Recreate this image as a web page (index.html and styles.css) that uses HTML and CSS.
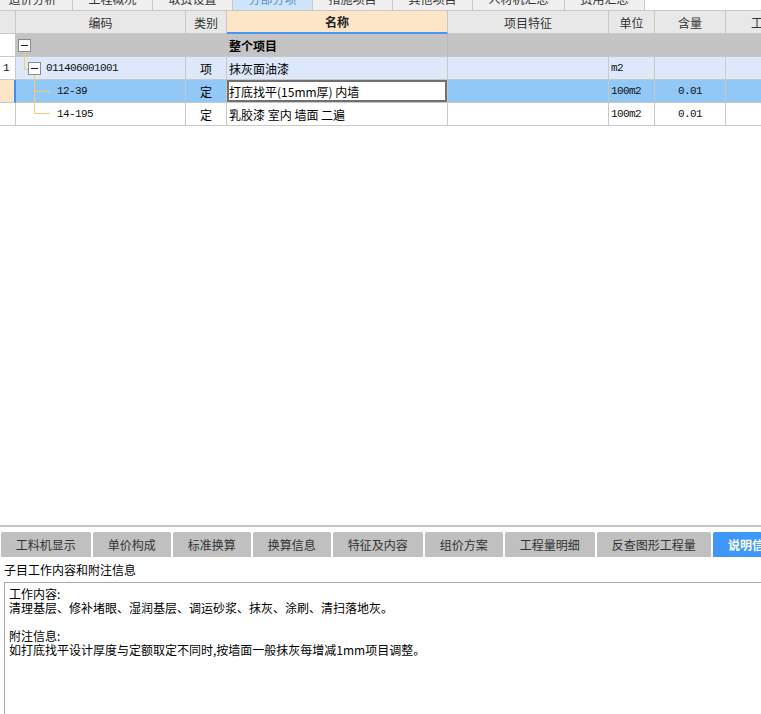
FILE: index.html
```html
<!DOCTYPE html>
<html lang="zh-CN">
<head>
<meta charset="utf-8">
<title>分部分项</title>
<link rel="stylesheet" href="styles.css">
</head>
<body>
<div class="page">
  <div class="toptabs">
    <div class="ttab first">造价分析</div>
    <div class="ttab">工程概况</div>
    <div class="ttab">取费设置</div>
    <div class="ttab active">分部分项</div>
    <div class="ttab">措施项目</div>
    <div class="ttab">其他项目</div>
    <div class="ttab wide">人材机汇总</div>
    <div class="ttab">费用汇总</div>
  </div>

  <div class="grid">
    <div class="row head">
      <div class="c c0"></div>
      <div class="c c1 center">编码</div>
      <div class="c c2 center">类别</div>
      <div class="c c3 center namehead">名称</div>
      <div class="c c4 center">项目特征</div>
      <div class="c c5 center">单位</div>
      <div class="c c6 center">含量</div>
      <div class="c c7 center">工程量</div>
    </div>
    <div class="row r-root">
      <div class="c c0 blank"></div>
      <div class="c c1"></div>
      <div class="c c2"></div>
      <div class="c c3 bold">整个项目</div>
      <div class="c c4"></div>
      <div class="c c5"></div>
      <div class="c c6"></div>
      <div class="c c7"></div>
    </div>
    <div class="row r-item">
      <div class="c c0 blank mono num">1</div>
      <div class="c c1 mono lvl1">011406001001</div>
      <div class="c c2 center">项</div>
      <div class="c c3">抹灰面油漆</div>
      <div class="c c4"></div>
      <div class="c c5 mono">m2</div>
      <div class="c c6"></div>
      <div class="c c7"></div>
    </div>
    <div class="row r-sel">
      <div class="c c0 marker"></div>
      <div class="c c1 mono lvl2">12-39</div>
      <div class="c c2 center">定</div>
      <div class="c c3 editing">打底找平(15mm厚) 内墙</div>
      <div class="c c4"></div>
      <div class="c c5 mono">100m2</div>
      <div class="c c6 mono center">0.01</div>
      <div class="c c7"></div>
    </div>
    <div class="row r-plain">
      <div class="c c0 blank"></div>
      <div class="c c1 mono lvl2">14-195</div>
      <div class="c c2 center">定</div>
      <div class="c c3">乳胶漆 室内 墙面 二遍</div>
      <div class="c c4"></div>
      <div class="c c5 mono">100m2</div>
      <div class="c c6 mono center">0.01</div>
      <div class="c c7"></div>
    </div>
  </div>

  <svg class="tree" width="60" height="130" viewBox="0 0 60 130" aria-hidden="true">
    <g stroke="#ffc56f" stroke-width="1" fill="none">
      <path d="M24.5 52 V69.5 H28"/>
      <path d="M34.5 75 V113.5 H50 M34.5 91.5 H50"/>
    </g>
    <rect x="18.5" y="39.5" width="12" height="12" fill="#fff" stroke="#8a8a8a"/>
    <path d="M21 45.5 H28" stroke="#222" stroke-width="1"/>
    <rect x="28.5" y="62.5" width="12" height="12" fill="#fff" stroke="#8a8a8a"/>
    <path d="M31 68.5 H38" stroke="#222" stroke-width="1"/>
  </svg>

  <div class="spacer"></div>

  <div class="bottom">
    <div class="btabs">
      <div class="btab">工料机显示</div>
      <div class="btab">单价构成</div>
      <div class="btab">标准换算</div>
      <div class="btab">换算信息</div>
      <div class="btab">特征及内容</div>
      <div class="btab">组价方案</div>
      <div class="btab">工程量明细</div>
      <div class="btab">反查图形工程量</div>
      <div class="btab active">说明信息</div>
    </div>
    <div class="label">子目工作内容和附注信息</div>
    <div class="memo">工作内容:
清理基层、修补堵眼、湿润基层、调运砂浆、抹灰、涂刷、清扫落地灰。

附注信息:
如打底找平设计厚度与定额取定不同时,按墙面一般抹灰每增减1mm项目调整。</div>
  </div>
</div>
</body>
</html>
```

FILE: styles.css
```css
* { box-sizing: border-box; }

html, body {
  margin: 0;
  padding: 0;
  background: #fff;
}

body {
  width: 761px;
  height: 714px;
  overflow: hidden;
  font-family: "Noto Sans CJK SC", "Noto Sans", sans-serif;
  font-size: 12px;
  color: #000;
}

.page {
  position: relative;
  width: 761px;
  height: 714px;
  display: flex;
  flex-direction: column;
  overflow: hidden;
}

/* top tabs (cut off at the top edge) */
.toptabs {
  height: 11px;
  flex: none;
  display: flex;
  align-items: flex-end;
  overflow: hidden;
  border-bottom: 1px solid #c8c8c8;
  background: #fff;
}

.ttab {
  flex: none;
  width: 80px;
  height: 24px;
  display: flex;
  align-items: center;
  justify-content: center;
  background: #f0f0f0;
  border-right: 1px solid #c8c8c8;
  color: #333;
  font-size: 12px;
  white-space: nowrap;
}

.ttab.first { margin-left: -7px; }
.ttab.wide { width: 92px; }
.ttab.active {
  background: #cfe5fb;
  color: #5b8fc9;
}

/* grid */
.grid {
  flex: none;
  width: 813px;
}

.row {
  display: grid;
  grid-template-columns: 16px 170px 41px 221px 161px 46px 71px 87px;
  height: 23px;
}

.c {
  height: 23px;
  border-right: 1px solid #c8c8c8;
  border-bottom: 1px solid #c8c8c8;
  display: flex;
  align-items: center;
  padding-left: 2px;
  white-space: nowrap;
  overflow: hidden;
}

.center {
  justify-content: center;
  padding-left: 0;
}

.bold { font-weight: 700; }

.mono {
  font-family: "Liberation Mono", "DejaVu Sans Mono", monospace;
  font-size: 11px;
  letter-spacing: -0.6px;
  color: #111;
}

.head .c {
  background: #e8e8e8;
  color: #333;
  font-size: 12px;
}

.head .namehead {
  background: #fde6c8;
  font-weight: 700;
  color: #222;
  border-bottom: 2px solid #4697f4;
}

.r-root .c { background: #c4c4c4; border-right-color: #c4c4c4; border-bottom-color: #c8c8c8; }
.r-root .c3 { border-right-color: #bcbcbc; }
.r-item .c { background: #dde9fb; }
.r-sel .c { background: #92c8f6; }
.r-plain .c { background: #fff; }

.row .blank { background: #fff; }
.row .num { padding-left: 3px; }

.r-sel .marker {
  background: #fde6c8;
  border-right: 2px solid #3f8ff2;
}

.r-sel .editing {
  background: #fff;
  box-shadow: inset 0 0 0 2px #707070;
  padding-left: 2px;
}

.lvl1 { padding-left: 30px; }
.lvl2 { padding-left: 41px; }

.tree {
  position: absolute;
  left: 0;
  top: 0;
}

.spacer {
  flex: 1;
}

/* bottom panel */
.bottom {
  flex: none;
  height: 189px;
  border-top: 2px solid #c4c4c4;
  display: flex;
  flex-direction: column;
}

.btabs {
  margin-top: 5px;
  height: 25px;
  display: flex;
  gap: 2.5px;
  padding-left: 1px;
  flex: none;
}

.btab {
  flex: none;
  height: 25px;
  padding: 0 14.75px;
  display: flex;
  align-items: center;
  background: #c0c0c0;
  color: #333;
  font-size: 12px;
  border-radius: 2px 2px 0 0;
  white-space: nowrap;
}

.btab.active {
  background: #3f97f9;
  color: #fff;
  font-weight: 700;
}

.label {
  flex: none;
  height: 25px;
  display: flex;
  align-items: center;
  padding-left: 4px;
  font-size: 12px;
}

.memo {
  flex: 1;
  margin-left: 4px;
  width: 780px;
  border: 1px solid #a8a8a8;
  border-bottom: none;
  padding: 4px 4px;
  line-height: 14px;
  font-size: 12px;
  white-space: pre-line;
}
```
